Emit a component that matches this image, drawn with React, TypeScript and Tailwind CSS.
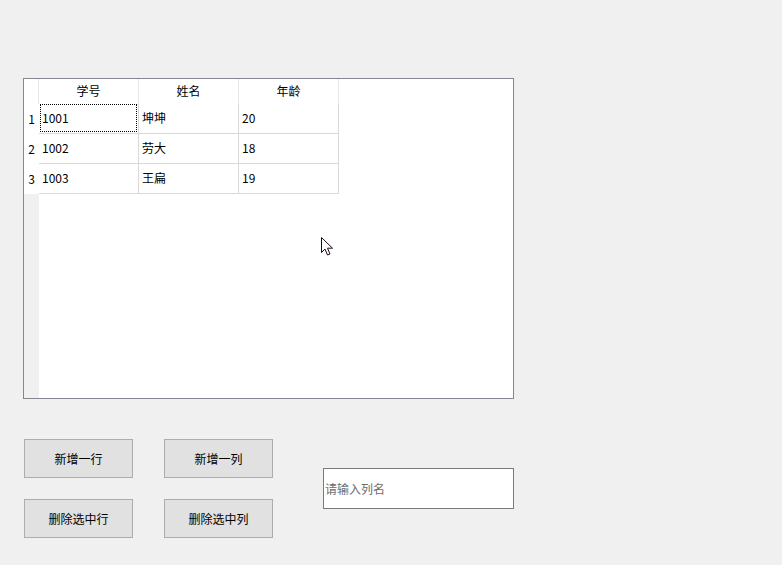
const columns = ['学号', '姓名', '年龄']

const rows = [
  ['1001', '坤坤', '20'],
  ['1002', '劳大', '18'],
  ['1003', '王扁', '19'],
]

function Cursor() {
  return (
    <svg className="absolute left-[321px] top-[237px]" width="13" height="20" viewBox="0 0 13 20">
      <path
        d="M0.5 0.5 L0.5 15.5 L4 12 L6.5 18 L9 17 L6.5 11.2 L11.5 11.2 Z"
        fill="#ffffff"
        stroke="#1a0a1a"
        strokeWidth="1"
        strokeLinejoin="miter"
      />
    </svg>
  )
}

function DataGrid() {
  return (
    <div className="flex h-[321px] w-[491px] border border-[#828790] bg-white">
      {/* row headers */}
      <div className="flex w-[15px] flex-col">
        <div className="h-[25px] border-r border-[#e6e6e6]" />
        {rows.map((_, i) => (
          <div key={i} className="flex h-[30px] items-center justify-center pb-[1px] text-black">
            {i + 1}
          </div>
        ))}
        <div className="flex-1 bg-[#f0f0f0]" />
      </div>

      <div className="flex flex-col">
        <div className="flex h-[25px]">
          {columns.map(c => (
            <div
              key={c}
              className="flex w-[100px] items-center justify-center border-r border-[#e6e6e6] pb-[1px] text-black"
            >
              {c}
            </div>
          ))}
        </div>
        {rows.map((r, ri) => (
          <div key={ri} className="flex h-[30px]">
            {r.map((v, ci) => (
              <div
                key={ci}
                className="relative flex w-[100px] items-center border-r border-b border-[#d9d9d9] pb-[1px] pl-[3px] text-black"
              >
                {ri === 0 && ci === 0 && (
                  <div className="absolute top-0 right-[1px] bottom-[1px] left-[1px] border border-dotted border-black" />
                )}
                <span className="relative">{v}</span>
              </div>
            ))}
          </div>
        ))}
      </div>
    </div>
  )
}

export default function App() {
  return (
    <div
      className="relative h-[565px] w-[782px] bg-[#f0f0f0] pt-[78px] pl-[23px] text-[12px] leading-none"
      style={{ fontFamily: '"Noto Sans CJK SC", "Noto Sans", sans-serif' }}
    >
      <DataGrid />

      <div className="mt-[40px] ml-[1px] flex">
        <div className="grid grid-cols-[109px_109px] gap-x-[31px] gap-y-[21px]">
          {['新增一行', '新增一列', '删除选中行', '删除选中列'].map(t => (
            <button
              key={t}
              className="flex h-[39px] items-center justify-center border border-[#adadad] bg-[#e1e1e1] text-black"
            >
              {t}
            </button>
          ))}
        </div>
        <div className="ml-[50px] mt-[29px] flex h-[41px] w-[191px] items-center border border-[#7a7a7a] bg-white pl-[1px]">
          <input
            className="w-full bg-transparent text-[12px] text-black outline-none placeholder:text-[#6d6d6d]"
            placeholder="请输入列名"
          />
        </div>
      </div>

      <Cursor />
    </div>
  )
}
